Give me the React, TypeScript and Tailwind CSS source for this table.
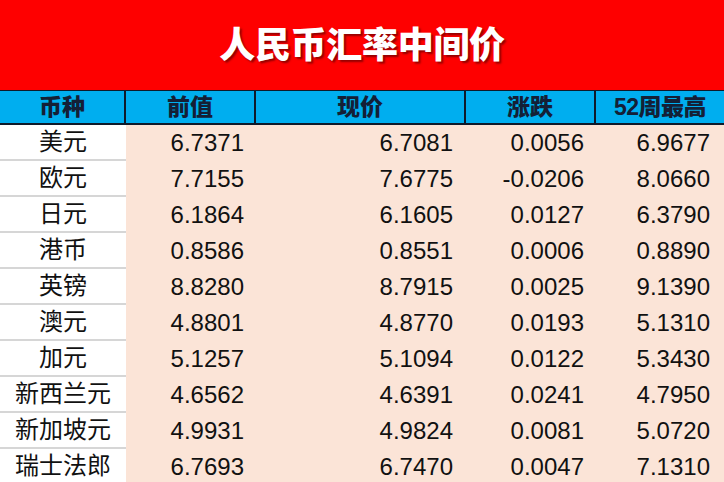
import React from "react";

const rows: [string, string, string, string, string][] = [
  ["美元", "6.7371", "6.7081", "0.0056", "6.9677"],
  ["欧元", "7.7155", "7.6775", "-0.0206", "8.0660"],
  ["日元", "6.1864", "6.1605", "0.0127", "6.3790"],
  ["港币", "0.8586", "0.8551", "0.0006", "0.8890"],
  ["英镑", "8.8280", "8.7915", "0.0025", "9.1390"],
  ["澳元", "4.8801", "4.8770", "0.0193", "5.1310"],
  ["加元", "5.1257", "5.1094", "0.0122", "5.3430"],
  ["新西兰元", "4.6562", "4.6391", "0.0241", "4.7950"],
  ["新加坡元", "4.9931", "4.9824", "0.0081", "5.0720"],
  ["瑞士法郎", "6.7693", "6.7470", "0.0047", "7.1310"],
];

const font = "font-['Liberation_Sans','Noto_Sans_CJK_SC',sans-serif]";

export default function App() {
  return (
    <div className={`w-[724px] h-[482px] overflow-hidden bg-white ${font}`}>
      <div className="h-[90px] bg-[#fe0000] flex items-center justify-center">
        <span className="text-white font-black text-[36px] leading-none tracking-[-0.3px] [text-shadow:2px_2px_2px_rgba(60,0,0,0.55)] pt-[2px]">
          人民币汇率中间价
        </span>
      </div>
      <div className="grid grid-cols-[126px_130px_210px_130px_128px] h-[35px] bg-[#00aeef] border-t border-b-2 border-[#0f1a2a] text-[#142036] font-black text-[23px] leading-none">
        <div className="flex items-center justify-center border-r-2 border-[#0f1a2a]">币种</div>
        <div className="flex items-center justify-center border-r-2 border-[#0f1a2a]">前值</div>
        <div className="flex items-center justify-center border-r-2 border-[#0f1a2a]">现价</div>
        <div className="flex items-center justify-center border-r-2 border-[#0f1a2a]">涨跌</div>
        <div className="flex items-center justify-center tracking-[-0.5px]">52周最高</div>
      </div>
      <div className="grid grid-cols-[126px_130px_210px_130px_128px]">
        {rows.map((r, i) => (
          <React.Fragment key={i}>
            <div className="h-[36px] flex items-center justify-center bg-white border-b-2 border-[#d6d6d6] text-[24px] text-[#111] leading-none">
              {r[0]}
            </div>
            <div className="h-[36px] flex items-center justify-end pr-[12px] bg-[#fbe4d7] text-[24px] text-[#111] leading-none">
              {r[1]}
            </div>
            <div className="h-[36px] flex items-center justify-end pr-[13px] bg-[#fbe4d7] text-[24px] text-[#111] leading-none">
              {r[2]}
            </div>
            <div className="h-[36px] flex items-center justify-end pr-[12px] bg-[#fbe4d7] text-[24px] text-[#111] leading-none">
              {r[3]}
            </div>
            <div className="h-[36px] flex items-center justify-end pr-[14px] bg-[#fbe4d7] text-[24px] text-[#111] leading-none">
              {r[4]}
            </div>
          </React.Fragment>
        ))}
      </div>
    </div>
  );
}
